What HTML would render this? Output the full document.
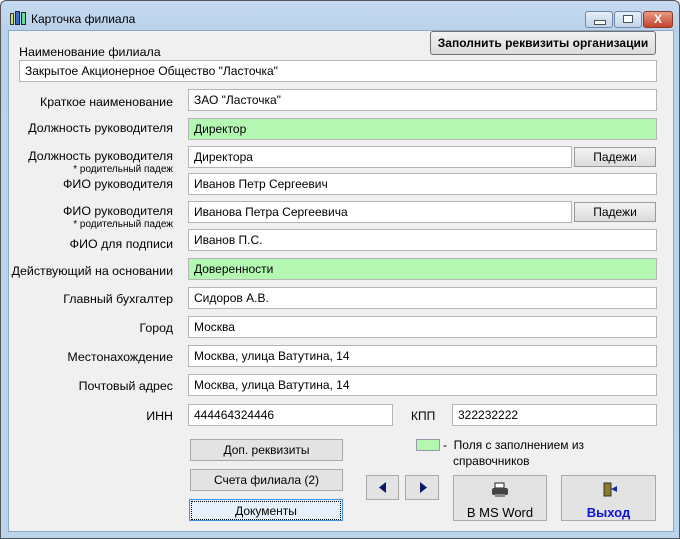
<!DOCTYPE html><html><head><meta charset="utf-8"><style>
body{margin:0;width:680px;height:539px;overflow:hidden;font-family:"Liberation Sans",sans-serif;font-size:12px;background:#fff}
.win{position:absolute;left:0;top:0;width:678px;height:537px;border:1px solid #555;border-radius:6px 6px 0 0;background:linear-gradient(#c5daf0,#b9d1ea 30px,#bcd4ec);}
.client{position:absolute;left:8px;top:30px;width:664px;height:500px;background:#f0f0f0;border:1px solid #8ea8c8}
.t{position:absolute;white-space:nowrap}
.in{position:absolute;height:20px;background:#fff;border:1px solid #b5b5b5;line-height:20px;padding-left:5px;box-sizing:content-box;white-space:nowrap}
.g{background:#b3f7b3}
.lb{position:absolute;right:507px;text-align:right;white-space:nowrap;font-size:12.4px}
.btn{position:absolute;border:1px solid #9a9a9a;background:linear-gradient(#f2f2f2,#dcdcdc);text-align:center;box-sizing:border-box;white-space:nowrap}
.fb{background:#e3e3e3;border-color:#a8a8a8}
</style></head><body>
<div class="win">
<svg style="position:absolute;left:8px;top:9px" width="18" height="16"><rect x="1" y="3" width="4" height="12" fill="#333"/><rect x="2" y="4" width="2" height="10" fill="#cde64a"/><rect x="6" y="1" width="5" height="14" fill="#223"/><rect x="7" y="2" width="3" height="12" fill="#3a6fc8"/><rect x="12" y="2" width="5" height="13" fill="#222"/><rect x="13" y="3" width="3" height="11" fill="#6d9"/></svg>
<div class="t" style="left:30px;top:11px;font-size:12px">Карточка филиала</div>
<div style="position:absolute;left:584px;top:10px;width:26px;height:15px;border:1px solid #6e86a8;border-radius:3px;background:linear-gradient(#e6eef8,#c3d3e8)"><div style="position:absolute;left:8px;top:8px;width:10px;height:3px;border:1px solid #455;background:#fff"></div></div>
<div style="position:absolute;left:613px;top:10px;width:26px;height:15px;border:1px solid #6e86a8;border-radius:3px;background:linear-gradient(#e6eef8,#c3d3e8)"><div style="position:absolute;left:8px;top:3px;width:8px;height:6px;border:1px solid #455;background:#fff"></div></div>
<div style="position:absolute;left:642px;top:10px;width:28px;height:15px;border:1px solid #8a3a2a;border-radius:3px;background:linear-gradient(#e89a84,#c4432a);color:#fff;font-weight:bold;text-align:center;line-height:15px;font-size:12px">X</div>
</div>
<div class="client"></div>
<div class="btn" style="left:430px;top:31px;width:226px;height:24px;line-height:22px;font-weight:bold;border-radius:3px;border-color:#707070">Заполнить реквизиты организации</div>
<div class="t" style="left:19px;top:45px;font-size:12.4px">Наименование филиала</div>
<div class="in" style="left:19px;top:60px;width:631px">Закрытое Акционерное Общество "Ласточка"</div>

<div class="lb" style="top:95px">Краткое наименование</div>
<div class="in" style="left:188px;top:89px;width:462px">ЗАО "Ласточка"</div>
<div class="lb" style="top:121px">Должность руководителя</div>
<div class="in g" style="left:188px;top:118px;width:462px">Директор</div>
<div class="lb" style="top:150px;line-height:12px">Должность руководителя<br><span style="font-size:10px">* родительный падеж</span></div>
<div class="in" style="left:188px;top:146px;width:377px">Директора</div>
<div class="btn" style="left:574px;top:147px;width:82px;height:20px;line-height:18px">Падежи</div>
<div class="lb" style="top:177px">ФИО руководителя</div>
<div class="in" style="left:188px;top:173px;width:462px">Иванов Петр Сергеевич</div>
<div class="lb" style="top:205px;line-height:12px">ФИО руководителя<br><span style="font-size:10px">* родительный падеж</span></div>
<div class="in" style="left:188px;top:201px;width:377px">Иванова Петра Сергеевича</div>
<div class="btn" style="left:574px;top:202px;width:82px;height:20px;line-height:18px">Падежи</div>
<div class="lb" style="top:237px">ФИО для подписи</div>
<div class="in" style="left:188px;top:229px;width:462px">Иванов П.С.</div>
<div class="lb" style="top:264px">Действующий на основании</div>
<div class="in g" style="left:188px;top:258px;width:462px">Доверенности</div>
<div class="lb" style="top:292px">Главный бухгалтер</div>
<div class="in" style="left:188px;top:287px;width:462px">Сидоров А.В.</div>
<div class="lb" style="top:321px">Город</div>
<div class="in" style="left:188px;top:316px;width:462px">Москва</div>
<div class="lb" style="top:350px">Местонахождение</div>
<div class="in" style="left:188px;top:345px;width:462px">Москва, улица Ватутина, 14</div>
<div class="lb" style="top:379px">Почтовый адрес</div>
<div class="in" style="left:188px;top:374px;width:462px">Москва, улица Ватутина, 14</div>
<div class="lb" style="top:409px">ИНН</div>
<div class="in" style="left:188px;top:404px;width:198px">444464324446</div>
<div class="t" style="left:411px;top:409px">КПП</div>
<div class="in" style="left:452px;top:404px;width:198px">322232222</div>

<div class="btn fb" style="left:190px;top:439px;width:153px;height:22px;line-height:20px">Доп. реквизиты</div>
<div class="btn fb" style="left:190px;top:469px;width:153px;height:22px;line-height:20px">Счета филиала (2)</div>
<div class="btn" style="left:189px;top:499px;width:154px;height:22px;line-height:18px;border-color:#3c8fd8;background:#e6f0fa"><div style="margin:1px;border:1px dotted #000;height:17px">Документы</div></div>
<div style="position:absolute;left:416px;top:439px;width:22px;height:10px;background:#b3f7b3;border:1px solid #99a"></div>
<div class="t" style="left:443px;top:437px;line-height:16px">-&nbsp; Поля с заполнением из<br><span style="margin-left:10px">справочников</span></div>
<div class="btn fb" style="left:366px;top:475px;width:33px;height:25px"><svg width="31" height="23"><polygon points="19,6 12,11.5 19,17" fill="#0a1a6a"/></svg></div>
<div class="btn fb" style="left:405px;top:475px;width:34px;height:25px"><svg width="32" height="23"><polygon points="14,6 21,11.5 14,17" fill="#0a1a6a"/></svg></div>
<div class="btn fb" style="left:453px;top:475px;width:94px;height:46px"><svg width="20" height="16" style="margin-top:6px"><rect x="5" y="1" width="9" height="5" fill="#fff" stroke="#222"/><rect x="2" y="6" width="16" height="7" rx="2" fill="#444"/><rect x="5" y="12" width="10" height="3" fill="#888"/></svg><div style="margin-top:4px;font-size:13px">В MS Word</div></div>
<div class="btn fb" style="left:561px;top:475px;width:95px;height:46px"><svg width="20" height="16" style="margin-top:6px"><rect x="5" y="1" width="7" height="13" fill="#8a7a2a" stroke="#333"/><polygon points="12,7 18,4 18,10" fill="#1a2aa0"/><rect x="14" y="6" width="4" height="2" fill="#1a2aa0"/></svg><div style="margin-top:4px;font-size:13px;color:#1010e0;font-weight:bold">Выход</div></div>
</body></html>
